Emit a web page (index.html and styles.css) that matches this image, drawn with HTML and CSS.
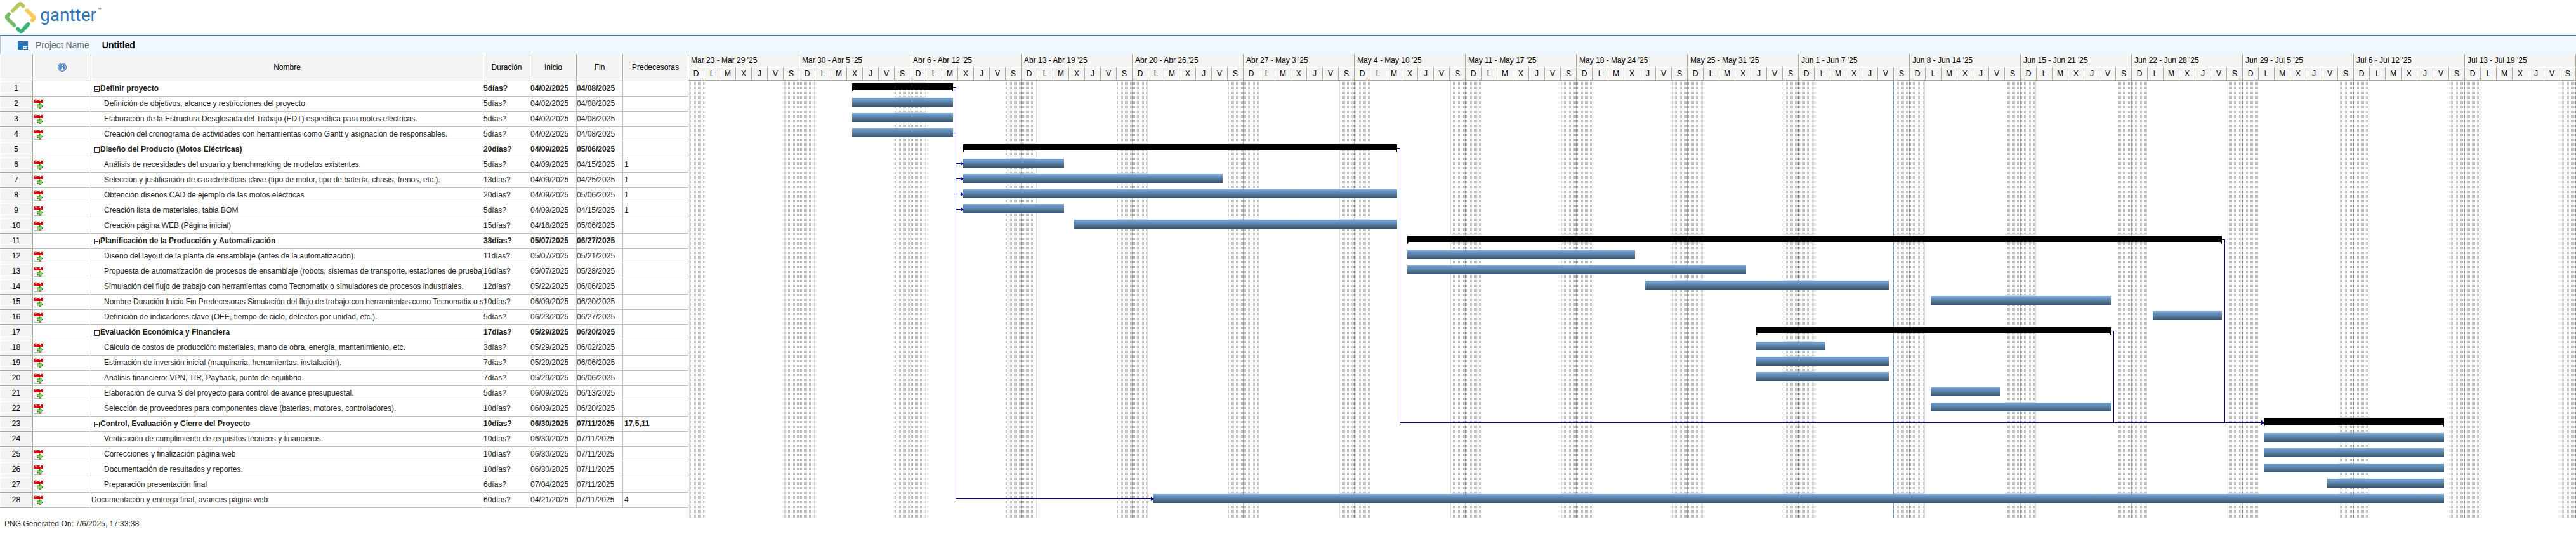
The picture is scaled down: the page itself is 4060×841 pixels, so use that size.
FILE: index.html
```html
<!DOCTYPE html>
<html lang="es">
<head>
<meta charset="utf-8">
<title>Gantter - Untitled</title>
<link rel="stylesheet" href="styles.css">
</head>
<body>
<header class="brand">
  <svg class="brand-mark" viewBox="0 0 56 56" aria-hidden="true">
    <g fill="none" stroke-width="6" stroke-linecap="round" stroke-linejoin="round">
      <path stroke="#bcc75a" d="M20 17 29.500 7.500Q32 5 34.500 7.500L36.500 9.500"/>
      <path stroke="#fbcb55" d="M42.500 16.500 52.500 26Q54.500 28 53 30L51 32"/>
      <path stroke="#34b573" d="M28 45.500 30.500 48Q33 50.500 35.500 48L44.500 38"/>
      <path stroke="#78bb6b" d="M14 22.500 12 24.500Q9.500 27 12 29.500L22.500 40"/>
    </g>
  </svg>
  <span class="brand-name">gantter</span><span class="brand-tm">™</span>
</header>
<section class="project">
  <svg class="project-icon" viewBox="0 0 16 14" aria-hidden="true">
    <path fill="#2a76bb" d="M0 0h7l1 1h8v2H0zM0 4h16v10H0z"/>
    <path fill="#fff" d="M9 9h6v4H9z"/>
    <path fill="#2a76bb" d="M10 10h2v1h-2zM13 10h1v1h-1z"/>
  </svg>
  <span class="project-label">Project Name</span>
  <strong class="project-name">Untitled</strong>
</section>
<main class="plan">
  <table class="tasks">
    <colgroup>
      <col class="col-num"><col class="col-info"><col class="col-name"><col class="col-duration">
      <col class="col-date"><col class="col-date"><col class="col-pred">
    </colgroup>
    <thead>
      <tr>
        <th></th>
        <th>
          <svg class="info-icon" viewBox="0 0 14 14" role="img" aria-label="Información">
            <circle cx="7" cy="7" r="6.500" fill="#5f93cd" stroke="#4a6fa5"/>
            <circle cx="7" cy="7" r="5.500" fill="none" stroke="#a9c8ea"/>
            <path fill="#fff" d="M6 3h2v2H6zM5 6h3v4h1v1H5v-1h1V7H5z"/>
          </svg>
        </th>
        <th>Nombre</th><th>Duración</th><th>Inicio</th><th>Fin</th><th>Predecesoras</th>
      </tr>
    </thead>
    <tbody id="task-rows"></tbody>
  </table>
  <section class="chart" aria-label="Diagrama de Gantt">
    <div class="weeks" id="weeks"></div>
    <div class="canvas">
      <div class="backdrop" id="backdrop"></div>
      <div class="bars" id="bars"></div>
      <div class="links" id="links"></div>
    </div>
  </section>
</main>
<footer class="stamp">PNG Generated On: 7/6/2025, 17:33:38</footer>
<script src="script.js"></script>
</body>
</html>
```

FILE: styles.css
```css
:root {
  --row: 24px;
  --edge: #aca899;
  --cell: #c0c0c0;
  --head: #f4f4f4;
  --link: #00008b;
}

* { box-sizing: border-box; }

body {
  margin: 0;
  background: #fff;
  color: #222;
  font: 12px/20px "Liberation Sans", Arial, sans-serif;
}

.brand {
  display: flex;
  align-items: flex-start;
  height: 55px;
}
.brand-mark { width: 56px; height: 56px; margin-right: 7px; }
.brand-name { font: 28px/48px Roboto, sans-serif; color: #2a76bb; }
.brand-tm { font: 10px/32px Roboto, sans-serif; color: #444; margin-left: 2px; }

.project {
  display: flex;
  align-items: center;
  height: 30px;
  padding-left: 27px;
  border-top: 1px solid #2a76bb;
  border-left: 1px solid var(--cell);
  background: #eff7ff;
  font-size: 14px;
}
.project-icon { width: 16px; height: 14px; margin-right: 12px; }
.project-label { color: #666; margin-right: 20px; }
.project-name { color: #000; }

.plan { display: flex; align-items: flex-start; }

.tasks {
  flex: none;
  width: 1085px;
  table-layout: fixed;
  border-collapse: separate;
  border-spacing: 0;
}
.col-num { width: 52px; }
.col-info { width: 92px; }
.col-name { width: 618px; }
.col-duration { width: 74px; }
.col-date { width: 73px; }
.col-pred { width: 103px; }

.tasks th {
  padding: 0;
  background: var(--head);
  border-right: 1px solid var(--edge);
  border-bottom: 1px solid var(--edge);
  box-shadow: inset 1px 1px #fff;
  color: #000;
  font-weight: normal;
  text-align: center;
}
.tasks thead th { height: 43px; box-shadow: inset 1px 0 #fff; }
.tasks tbody th { line-height: 23px; }
.tasks td {
  height: var(--row);
  padding: 0;
  border-right: 1px solid var(--cell);
  border-bottom: 1px solid var(--cell);
  line-height: 22px;
  vertical-align: top;
  white-space: nowrap;
  overflow: hidden;
}
.tasks .summary td { font-weight: bold; }
.tasks .name { padding-left: 20px; }
.tasks .summary .name { padding-left: 4px; }
.tasks .top-level .name { padding-left: 0; }
.tasks .pred { padding-left: 2px; }
.info-icon { display: block; width: 14px; height: 14px; margin: 0 auto; }
.calendar { display: block; width: 15px; height: 16px; margin: 4px 0 0 1px; }

.toggle {
  position: relative;
  width: 9px;
  height: 9px;
  margin: 0 1px 0 0;
  padding: 0;
  border: 1px solid #333;
  background: #fff;
  vertical-align: -1px;
}
.toggle::after {
  content: "";
  position: absolute;
  inset: 3px 1px;
  background: #333;
}

.chart { flex: 1; min-width: 0; }
.weeks { display: grid; grid-template-columns: repeat(17, 1fr); color: #000; background: var(--head); }
.week-label {
  height: 21px;
  padding-left: 4px;
  border-right: 1px solid var(--edge);
  border-bottom: 1px solid var(--edge);
  box-shadow: inset 1px 0 #fff;
  white-space: nowrap;
}
.week-days { display: grid; grid-template-columns: repeat(7, 1fr); }
.week-days span {
  height: 21px;
  border-right: 1px solid var(--edge);
  border-bottom: 1px solid var(--edge);
  box-shadow: inset 1px 1px #fff;
  text-align: center;
}

.canvas { position: relative; padding: 1px 0 16px; }
.backdrop {
  position: absolute;
  inset: 0;
  display: grid;
  grid-template-columns: repeat(119, 1fr);
}
.weekend {
  background: conic-gradient(from 270deg at 1px 1px, #c0c0c0 90deg, transparent 0) 1px 0 / 2px 2px;
}
.week-end-line { position: relative; }
.week-end-line::after {
  content: "";
  position: absolute;
  inset: 0 0 0 auto;
  width: 1px;
  background: linear-gradient(#777 50%, #ddd 50%) 0 0 / 1px 2px;
}
.today { border-left: 1px solid #6fa3cf; margin-left: -1px; }

.bars { position: relative; }
.track { height: var(--row); padding-top: 2px; }
.track-summary { padding-top: 3px; }
.bar { height: 14px; background: linear-gradient(#78abdc, #3a536c); }
.bar-summary { position: relative; height: 10px; background: #000; }
.bar-summary::before,
.bar-summary::after {
  content: "";
  position: absolute;
  top: 10px;
  border-bottom: 4px solid transparent;
}
.bar-summary::before { left: 0; border-left: 2px solid #000; }
.bar-summary::after { right: 0; border-right: 2px solid #000; }

.links { position: absolute; inset: 1px 0 0; }
.link-drop {
  position: absolute;
  width: 5px;
  border-top: 1px solid var(--link);
  border-right: 1px solid var(--link);
}
.link-run {
  position: absolute;
  height: 1px;
  margin-left: 4px;
  background: var(--link);
}
.link-run::after {
  content: "";
  position: absolute;
  right: 0;
  top: -3px;
  border: solid transparent;
  border-width: 4px 0 3px 4px;
  border-left-color: var(--link);
}

.stamp { padding: 0 7px; line-height: 18px; }
```

FILE: script.js
```js
const DAYS = 119;
const ORIGIN = Date.UTC(2025, 2, 23);
const ROW = 24;
const MONTHS = ["Ene", "Feb", "Mar", "Abr", "May", "Jun", "Jul"];

// [name, kind, duration, start, end, predecessors]; kinds: S summary, T task, P task without constraint, R top-level task
const tasks = [
  ["Definir proyecto", "S", 5, "04/02", "04/08", ""],
  ["Definición de objetivos, alcance y restricciones del proyecto", "T", 5, "04/02", "04/08", ""],
  ["Elaboración de la Estructura Desglosada del Trabajo (EDT) específica para motos eléctricas.", "T", 5, "04/02", "04/08", ""],
  ["Creación del cronograma de actividades con herramientas como Gantt y asignación de responsables.", "T", 5, "04/02", "04/08", ""],
  ["Diseño del Producto (Motos Eléctricas)", "S", 20, "04/09", "05/06", ""],
  ["Análisis de necesidades del usuario y benchmarking de modelos existentes.", "T", 5, "04/09", "04/15", "1"],
  ["Selección y justificación de características clave (tipo de motor, tipo de batería, chasis, frenos, etc.).", "T", 13, "04/09", "04/25", "1"],
  ["Obtención diseños CAD de ejemplo de las motos eléctricas", "T", 20, "04/09", "05/06", "1"],
  ["Creación lista de materiales, tabla BOM", "T", 5, "04/09", "04/15", "1"],
  ["Creación página WEB (Página inicial)", "T", 15, "04/16", "05/06", ""],
  ["Planificación de la Producción y Automatización", "S", 38, "05/07", "06/27", ""],
  ["Diseño del layout de la planta de ensamblaje (antes de la automatización).", "T", 11, "05/07", "05/21", ""],
  ["Propuesta de automatización de procesos de ensamblaje (robots, sistemas de transporte, estaciones de prueba).", "T", 16, "05/07", "05/28", ""],
  ["Simulación del flujo de trabajo con herramientas como Tecnomatix o simuladores de procesos industriales.", "T", 12, "05/22", "06/06", ""],
  ["Nombre Duración Inicio Fin Predecesoras Simulación del flujo de trabajo con herramientas como Tecnomatix o s", "T", 10, "06/09", "06/20", ""],
  ["Definición de indicadores clave (OEE, tiempo de ciclo, defectos por unidad, etc.).", "T", 5, "06/23", "06/27", ""],
  ["Evaluación Económica y Financiera", "S", 17, "05/29", "06/20", ""],
  ["Cálculo de costos de producción: materiales, mano de obra, energía, mantenimiento, etc.", "T", 3, "05/29", "06/02", ""],
  ["Estimación de inversión inicial (maquinaria, herramientas, instalación).", "T", 7, "05/29", "06/06", ""],
  ["Análisis financiero: VPN, TIR, Payback, punto de equilibrio.", "T", 7, "05/29", "06/06", ""],
  ["Elaboración de curva S del proyecto para control de avance presupuestal.", "T", 5, "06/09", "06/13", ""],
  ["Selección de proveedores para componentes clave (baterías, motores, controladores).", "T", 10, "06/09", "06/20", ""],
  ["Control, Evaluación y Cierre del Proyecto", "S", 10, "06/30", "07/11", "17,5,11"],
  ["Verificación de cumplimiento de requisitos técnicos y financieros.", "P", 10, "06/30", "07/11", ""],
  ["Correcciones y finalización página web", "T", 10, "06/30", "07/11", ""],
  ["Documentación de resultados y reportes.", "T", 10, "06/30", "07/11", ""],
  ["Preparación presentación final", "T", 6, "07/04", "07/11", ""],
  ["Documentación y entrega final, avances página web", "R", 60, "04/21", "07/11", "4"]
];

const calendar = `<svg class="calendar" viewBox="0 0 15 16" role="img" aria-label="Restricción de fecha">
  <path fill="#fff" d="M0 6h13v9H0z"/><path fill="#aaa" d="M0 15h13v1H0zM0 6h1v9H0z"/>
  <path fill="#e00000" d="M0 1h14v5H0z"/>
  <path fill="#999" d="M2 0h3v3H2zM9 0h3v3H9z"/><path fill="#fff" d="M3 0h1v3H3zM10 0h1v3h-1z"/>
  <path fill="#8cc665" stroke="#3f7f2a" d="M5.500 9h4V6.500L14 11l-4.500 4.500V13h-4z"/></svg>`;

const dayIndex = (md) => {
  const [m, d] = md.split("/").map(Number);
  return (Date.UTC(2025, m - 1, d) - ORIGIN) / 86400000;
};
const pct = (days) => `${(days / DAYS) * 100}%`;
// A working day runs from about 8:00 to 17:00.
const startOf = (task) => dayIndex(task[3]) + 0.32;
const endOf = (task) => dayIndex(task[4]) + 0.68;

document.getElementById("task-rows").innerHTML = tasks.map(([name, kind, duration, start, end, pred], i) => {
  const cls = { S: "summary", R: "top-level" }[kind] || "";
  const toggle = kind === "S" ? `<button class="toggle" type="button" aria-label="Contraer"></button>` : "";
  return `<tr class="${cls}"><th scope="row">${i + 1}</th><td>${kind === "T" || kind === "R" ? calendar : ""}</td>
    <td class="name">${toggle}${name}</td><td>${duration}días?</td>
    <td>${start}/2025</td><td>${end}/2025</td><td class="pred">${pred}</td></tr>`;
}).join("");

const dateLabel = (index) => {
  const d = new Date(ORIGIN + index * 86400000);
  return `${MONTHS[d.getUTCMonth()]} ${d.getUTCDate()}`;
};
document.getElementById("weeks").innerHTML = Array.from({ length: 17 }, (_, w) =>
  `<div><div class="week-label">${dateLabel(w * 7)} - ${dateLabel(w * 7 + 6)} '25</div>
   <div class="week-days">${[..."DLMXJVS"].map((d) => `<span>${d}</span>`).join("")}</div></div>`).join("");

const today = dayIndex("06/07");
document.getElementById("backdrop").innerHTML = Array.from({ length: DAYS }, (_, i) => {
  const cls = [];
  if (i % 7 === 0 || i % 7 === 6) cls.push("weekend");
  if (i % 7 === 6) cls.push("week-end-line");
  if (i === today) cls.push("today");
  return `<div class="${cls.join(" ")}"></div>`;
}).join("");

document.getElementById("bars").innerHTML = tasks.map((task) => {
  const summary = task[1] === "S";
  const box = `margin-left:${pct(startOf(task))};width:${pct(endOf(task) - startOf(task))}`;
  return `<div class="track ${summary ? "track-summary" : ""}"><div class="${summary ? "bar-summary" : "bar"}" style="${box}"></div></div>`;
}).join("");

document.getElementById("links").innerHTML = tasks.map((task, to) =>
  task[5].split(",").filter(Boolean).map((id) => {
    const from = Number(id) - 1;
    const x1 = endOf(tasks[from]);
    const y1 = from * ROW + 9;
    const y2 = to * ROW + 9;
    return `<div class="link-drop" style="left:${pct(x1)};top:${y1}px;height:${y2 - y1}px"></div>
      <div class="link-run" style="left:${pct(x1)};top:${y2}px;width:calc(${pct(startOf(task) - x1)} - 4px)"></div>`;
  }).join("")).join("");
```
